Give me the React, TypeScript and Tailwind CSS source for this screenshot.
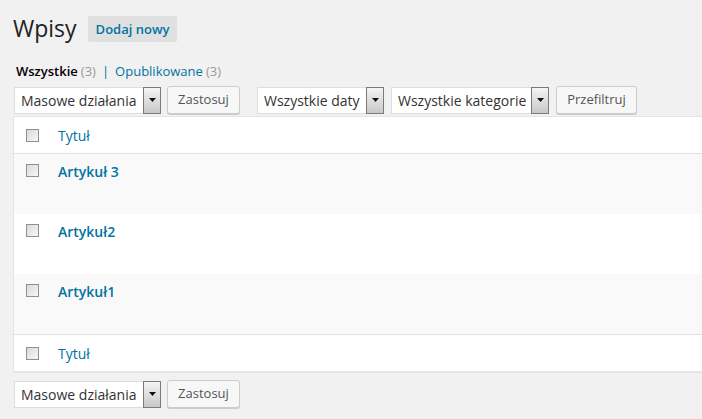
import React from 'react';

const font = { fontFamily: '"Open Sans", "DejaVu Sans", sans-serif' };

function Select({ label, width }: { label: string; width: string }) {
  return (
    <div className={`flex h-[27px] items-stretch bg-white border border-[#dddddd] ${width}`}>
      <span className="flex-1 pl-[6px] text-[14px] leading-[25px] text-[#333333] whitespace-nowrap">{label}</span>
      <span className="w-[18px] flex items-center justify-center border border-[#7a7a7a] bg-gradient-to-b from-[#f4f4f4] to-[#c8c8c8] -my-px -mr-px">
        <svg width="7" height="4" viewBox="0 0 7 4">
          <path d="M0 0h7L3.5 4z" fill="#111" />
        </svg>
      </span>
    </div>
  );
}

function Button({ label, width }: { label: string; width: string }) {
  return (
    <button className={`h-[28px] ${width} rounded-[3px] border border-[#cccccc] bg-[#f7f7f7] shadow-[0_1px_0_#cccccc] text-[13px] text-[#555555]`}>
      {label}
    </button>
  );
}

function Checkbox() {
  return (
    <span className="block w-[13px] h-[13px] border border-[#8f8f8f] bg-gradient-to-br from-[#d9d9d9] to-[#f7f7f7]" />
  );
}

const posts = ['Artykuł 3', 'Artykuł2', 'Artykuł1'];

export default function App() {
  return (
    <div className="w-[702px] h-[419px] overflow-hidden bg-[#f1f1f1]" style={font}>
      <div className="pl-[13px] pt-[14px] flex items-center gap-[11px]">
        <h1 className="text-[23px] leading-[29px] text-[#222222]">Wpisy</h1>
        <span className="h-[26px] px-[8px] rounded-[2px] bg-[#e0e0e0] text-[13px] leading-[26px] font-semibold text-[#0074a2]">
          Dodaj nowy
        </span>
      </div>

      <div className="pl-[16px] mt-[19px] text-[13px] leading-[18px] flex items-center">
        <span className="font-semibold text-black">Wszystkie</span>
        <span className="ml-[3px] text-[#999999]">(3)</span>
        <span className="mx-[6px] text-[#0074a2]">|</span>
        <span className="text-[#0074a2]">Opublikowane</span>
        <span className="ml-[3px] text-[#999999]">(3)</span>
      </div>

      <div className="pl-[14px] mt-[6px] flex items-center">
        <Select label="Masowe działania" width="w-[147px]" />
        <div className="ml-[6px]"><Button label="Zastosuj" width="w-[73px]" /></div>
        <div className="ml-[17px]"><Select label="Wszystkie daty" width="w-[127px]" /></div>
        <div className="ml-[7px]"><Select label="Wszystkie kategorie" width="w-[158px]" /></div>
        <div className="ml-[7px]"><Button label="Przefiltruj" width="w-[81px]" /></div>
      </div>

      <div className="ml-[13px] mt-[2px] bg-white border border-[#e5e5e5] border-r-0 shadow-[0_1px_1px_rgba(0,0,0,0.04)]">
        <div className="h-[37px] flex items-center border-b border-[#e1e1e1]">
          <div className="w-[44px] pl-[12px]"><Checkbox /></div>
          <span className="text-[14px] text-[#0074a2]">Tytuł</span>
        </div>
        {posts.map((p, i) => (
          <div key={p} className={`h-[60px] flex items-start pt-[8px] ${i % 2 === 0 ? 'bg-[#f9f9f9]' : 'bg-white'}`}>
            <div className="w-[44px] pl-[12px] pt-[2px]"><Checkbox /></div>
            <span className="text-[14px] leading-[19px] font-semibold text-[#0074a2]">{p}</span>
          </div>
        ))}
        <div className="h-[37px] flex items-center border-t border-[#e1e1e1]">
          <div className="w-[44px] pl-[12px]"><Checkbox /></div>
          <span className="text-[14px] text-[#0074a2]">Tytuł</span>
        </div>
      </div>

      <div className="pl-[14px] mt-[8px] flex items-center">
        <Select label="Masowe działania" width="w-[147px]" />
        <div className="ml-[6px]"><Button label="Zastosuj" width="w-[73px]" /></div>
      </div>
    </div>
  );
}
